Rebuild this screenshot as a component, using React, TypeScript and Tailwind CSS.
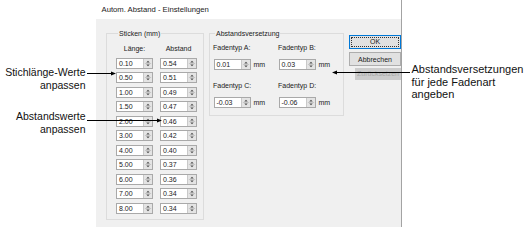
import React from 'react';

const font = { fontFamily: '"Liberation Sans", Arial, sans-serif' };

function Spinner() {
  return (
    <svg width="9" height="9" viewBox="0 0 9 9" className="shrink-0 bg-[#e4e4e4] border-l border-[#c9c9c9]">
      <polygon points="2.5,3.5 6.5,3.5 4.5,1.5" fill="#4d4d4d" />
      <line x1="1" y1="4.5" x2="8" y2="4.5" stroke="#c2c2c2" strokeWidth="1" />
      <polygon points="2.5,5.5 6.5,5.5 4.5,7.5" fill="#4d4d4d" />
    </svg>
  );
}

function SpinBox({ value }: { value: string }) {
  return (
    <div className="flex h-[11px] w-[37px] border border-[#a9a9a9] bg-white">
      <div className="flex-1 pl-[2px] text-[7px] leading-[9px] text-[#1a1a1a]">{value}</div>
      <Spinner />
    </div>
  );
}

const rows = [
  ['0.10', '0.54'],
  ['0.50', '0.51'],
  ['1.00', '0.49'],
  ['1.50', '0.47'],
  ['2.00', '0.46'],
  ['3.00', '0.42'],
  ['4.00', '0.40'],
  ['5.00', '0.37'],
  ['6.00', '0.36'],
  ['7.00', '0.34'],
  ['8.00', '0.34'],
];

function Offset({ label, value }: { label: string; value: string }) {
  return (
    <div className="flex w-[65px] flex-col">
      <div className="text-[7px] leading-[9px] text-[#1a1a1a]">{label}</div>
      <div className="mt-[6.5px] flex items-center pl-[0.5px]">
        <SpinBox value={value} />
        <span className="ml-[3px] text-[7px] leading-[9px] text-[#1a1a1a]">mm</span>
      </div>
    </div>
  );
}

export default function App() {
  return (
    <div className="relative flex h-[241px] w-[525px] overflow-hidden bg-white" style={font}>
      {/* left callouts */}
      <div className="flex w-[96px] shrink-0 flex-col items-end pr-[10.5px] pt-[66px] text-right text-[10.5px] leading-[12.5px] text-[#111]">
        <div>Stichlänge-Werte</div>
        <div>anpassen</div>
        <div className="mt-[19px]">Abstandswerte</div>
        <div>anpassen</div>
      </div>

      {/* dialog */}
      <div className="flex h-[227px] w-[306px] shrink-0 flex-col border-r border-[#a3a3a3]">
        <div className="flex h-[19px] items-center bg-white pl-[5.5px] text-[7.7px] text-[#1a1a1a]">
          Autom. Abstand - Einstellungen
        </div>
        <div className="flex flex-1 items-start bg-[#f0f0f0] pl-[10px] pt-[9.5px]">
          {/* Sticken group */}
          <fieldset className="w-[100px] border border-[#dcdcdc] pb-[5.5px] pl-[9px]">
            <legend className="ml-[2px] px-[1px] text-[7px] leading-[9px] text-[#1a1a1a]">Sticken (mm)</legend>
            <div className="flex gap-[7px] pt-[6.5px] text-[7px] leading-[9px] text-[#1a1a1a]">
              <div className="w-[37px] text-center">Länge:</div>
              <div className="w-[37px] text-center">Abstand</div>
            </div>
            <div className="mt-[4.5px] flex flex-col gap-[3.5px]">
              {rows.map(([a, b]) => (
                <div key={a} className="flex gap-[7px]">
                  <SpinBox value={a} />
                  <SpinBox value={b} />
                </div>
              ))}
            </div>
          </fieldset>

          {/* Abstandsversetzung group */}
          <fieldset className="ml-[5px] w-[127px] border border-[#dcdcdc] pb-[7px] pl-[3.5px]">
            <legend className="ml-[2px] px-[1px] text-[7px] leading-[9px] text-[#1a1a1a]">Abstandsversetzung</legend>
            <div className="flex pt-[5.5px]">
              <Offset label="Fadentyp A:" value="0.01" />
              <Offset label="Fadentyp B:" value="0.03" />
            </div>
            <div className="mt-[11.5px] flex">
              <Offset label="Fadentyp C:" value="-0.03" />
              <Offset label="Fadentyp D:" value="-0.06" />
            </div>
          </fieldset>

          {/* buttons */}
          <div className="ml-[5px] mt-[6px] flex flex-col text-[7px] leading-[9px]">
            <div className="flex h-[14px] w-[52px] border border-[#0078d7] bg-[#e1e1e1] p-[1px]">
              <div className="flex flex-1 items-center justify-center border border-dotted border-[#333] text-[#1a1a1a]">
                OK
              </div>
            </div>
            <div className="mt-[3.5px] flex h-[14px] w-[52px] items-center justify-center border border-[#adadad] bg-[#e1e1e1] text-[#1a1a1a]">
              Abbrechen
            </div>
            <div className="ml-[6px] mt-[1.5px] flex h-[12px] w-[46px] items-center justify-center bg-[#cccccc] text-[#a8a8a8]">
              Zurücksetzen
            </div>
          </div>
        </div>
      </div>

      {/* right callout */}
      <div className="flex flex-col pl-[9.5px] pt-[63px] text-[11px] leading-[12.5px] text-[#111]">
        <div>Abstandsversetzungen</div>
        <div>für jede Fadenart</div>
        <div>angeben</div>
      </div>

      {/* leader arrows over the dialog */}
      <svg className="pointer-events-none absolute left-0 top-0" width="525" height="241" viewBox="0 0 525 241">
        <line x1="87" y1="73.5" x2="112" y2="73.5" stroke="#000" strokeWidth="1" />
        <polygon points="116,73.5 111,71.5 111,75.5" fill="#000" />
        <line x1="87" y1="120.5" x2="158" y2="120.5" stroke="#000" strokeWidth="1" />
        <polygon points="162,120.5 157,118.5 157,122.5" fill="#000" />
        <line x1="336" y1="72.5" x2="410" y2="72.5" stroke="#000" strokeWidth="1" />
        <polygon points="332,72.5 337,70.5 337,74.5" fill="#000" />
      </svg>
    </div>
  );
}
